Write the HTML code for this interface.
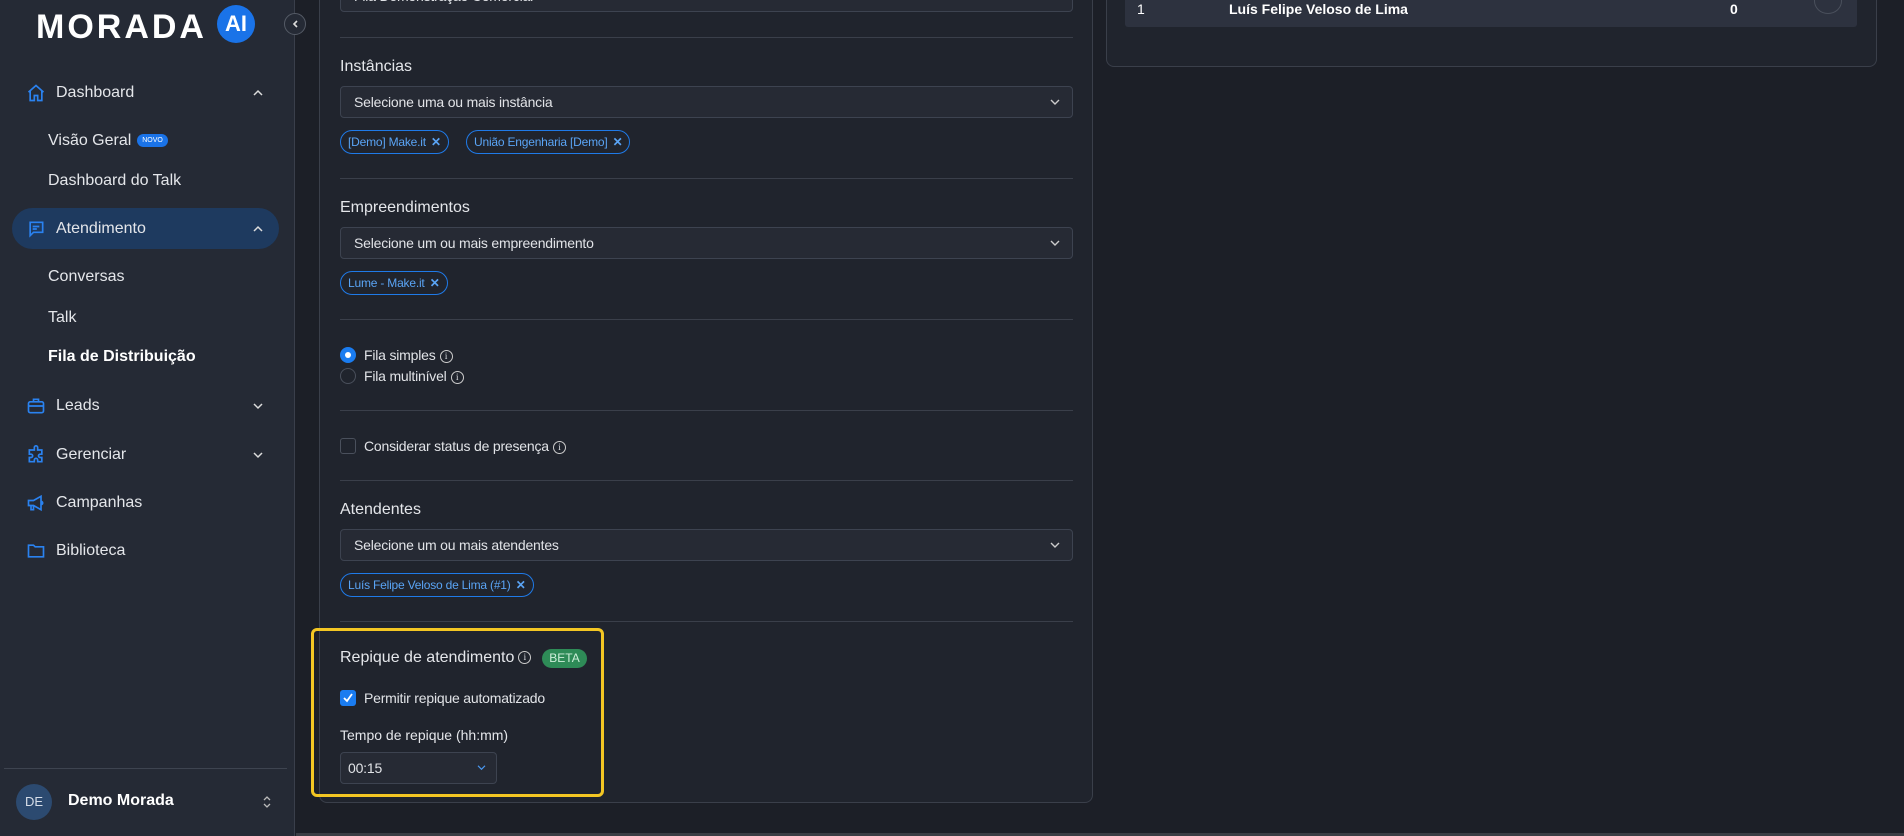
<!DOCTYPE html>
<html><head><meta charset="utf-8"><style>
*{box-sizing:border-box;margin:0;padding:0}
body{width:1904px;height:836px;overflow:hidden;background:#1c1f27;font-family:"Liberation Sans",sans-serif;color:#e6e8ec;position:relative}
.abs{position:absolute}
#side{left:0;top:0;width:295px;height:836px;background:#252a35;border-right:1px solid #3a3f4b}
.nav{position:absolute;left:0;width:295px;font-size:16px;color:#e4e6ea;display:flex;align-items:center;height:30px;transform:translateY(-15px)}
.nav .t{position:absolute;left:56px}
.sub{position:absolute;left:48px;font-size:16px;color:#e4e6ea;transform:translateY(-50%)}
.chev{position:absolute;left:252px;width:12px;height:12px}
.ic{position:absolute;left:26px;width:20px;height:20px}
#card{left:319px;top:-10px;width:774px;height:813px;background:#20242d;border:1px solid #3a3f4a;border-radius:8px}
.lab{position:absolute;left:340px;font-size:16px;color:#e4e6ea;transform:translateY(-50%)}
.div{position:absolute;left:340px;width:733px;height:1px;background:#3a3f4a}
.sel{position:absolute;left:340px;width:733px;height:32px;background:#262a34;border:1px solid #3d4350;border-radius:4px;font-size:14px;color:#e1e3e7;padding-left:13px;line-height:30px;letter-spacing:-0.2px}
.sel svg{position:absolute;right:12px;top:11px}
.chip{position:absolute;height:24px;border:1px solid #1f7ae8;border-radius:12px;font-size:12px;color:#5aa4f5;line-height:22px;padding:0 22px 0 7px;letter-spacing:-0.2px}
.chip:after{content:"✕";position:absolute;right:7px;top:0;font-size:12px;font-weight:bold;color:#5aa4f5}
.info{display:inline-block;width:13px;height:13px;border:1px solid #ccc;border-radius:50%;font-size:9px;line-height:11px;text-align:center;vertical-align:middle;margin-left:4px;font-family:"Liberation Serif",serif}
.opt{position:absolute;left:364px;font-size:14px;color:#e1e3e7;transform:translateY(-50%);letter-spacing:-0.2px}
</style></head><body>
<div id="side" class="abs">
  <div class="abs" style="left:36px;top:9px;font-size:34px;font-weight:bold;color:#fff;line-height:36px;letter-spacing:3px">MORADA</div>
  <div class="abs" style="left:217px;top:5px;width:38px;height:38px;border-radius:50%;background:#1a73e8;color:#fff;font-weight:bold;font-size:22px;text-align:center;line-height:38px">AI</div>
  <div class="nav" style="top:93px"><svg class="ic" style="top:5px" viewBox="0 0 24 24" fill="none" stroke="#2a82f0" stroke-width="2"><path d="M3 11l9-8 9 8M5 9v12h5v-6h4v6h5V9"/></svg><span class="t">Dashboard</span><svg class="chev" style="top:9px" viewBox="0 0 12 12" fill="none" stroke="#ddd" stroke-width="1.5"><path d="M2 8l4-4 4 4"/></svg></div>
  <div class="sub" style="top:141px">Visão Geral</div>
  <div class="abs" style="left:137px;top:134px;width:31px;height:13px;border-radius:7px;background:#1a73e8;color:#fff;font-size:7px;text-align:center;line-height:13px">NOVO</div>
  <div class="sub" style="top:181px">Dashboard do Talk</div>
  <div class="abs" style="left:12px;top:208px;width:267px;height:41px;border-radius:21px;background:#1e3a5f"></div>
  <div class="nav" style="top:229px"><svg class="ic" style="top:5px" viewBox="0 0 24 24" fill="none" stroke="#2a82f0" stroke-width="2"><path d="M4 4h16v12H9l-4 4V4zM8 9h8M8 12h5"/></svg><span class="t">Atendimento</span><svg class="chev" style="top:9px" viewBox="0 0 12 12" fill="none" stroke="#ddd" stroke-width="1.5"><path d="M2 8l4-4 4 4"/></svg></div>
  <div class="sub" style="top:277px">Conversas</div>
  <div class="sub" style="top:318px">Talk</div>
  <div class="sub" style="top:357px;font-weight:bold;color:#fff">Fila de Distribuição</div>
  <div class="nav" style="top:406px"><svg class="ic" style="top:5px" viewBox="0 0 24 24" fill="none" stroke="#2a82f0" stroke-width="2"><rect x="3" y="7" width="18" height="13" rx="2"/><path d="M9 7V4h6v3M3 12h18"/></svg><span class="t">Leads</span><svg class="chev" style="top:9px" viewBox="0 0 12 12" fill="none" stroke="#ddd" stroke-width="1.5"><path d="M2 4l4 4 4-4"/></svg></div>
  <div class="nav" style="top:455px"><svg class="ic" style="top:5px" viewBox="0 0 24 24" fill="none" stroke="#2a82f0" stroke-width="2"><path d="M10 3a2 2 0 014 0v3h5v5h-2a2 2 0 000 4h2v5h-5v-2a2 2 0 00-4 0v2H4v-5h2a2 2 0 000-4H4V6h6z"/></svg><span class="t">Gerenciar</span><svg class="chev" style="top:9px" viewBox="0 0 12 12" fill="none" stroke="#ddd" stroke-width="1.5"><path d="M2 4l4 4 4-4"/></svg></div>
  <div class="nav" style="top:503px"><svg class="ic" style="top:5px" viewBox="0 0 24 24" fill="none" stroke="#2a82f0" stroke-width="2"><path d="M3 9h6l9-5v16l-9-5H3zM6 15v5h3v-5M18 10a2 2 0 010 4"/></svg><span class="t">Campanhas</span></div>
  <div class="nav" style="top:551px"><svg class="ic" style="top:5px" viewBox="0 0 24 24" fill="none" stroke="#2a82f0" stroke-width="2"><path d="M3 5h6l2 2h10v12H3z"/></svg><span class="t">Biblioteca</span></div>
  <div class="abs" style="left:4px;top:768px;width:283px;height:1px;background:#3e4450"></div>
  <div class="abs" style="left:16px;top:784px;width:36px;height:36px;border-radius:50%;background:#2c4a70;color:#d6dde8;font-size:13px;text-align:center;line-height:36px">DE</div>
  <div class="abs" style="left:68px;top:792px;font-size:16px;font-weight:bold;color:#fff">Demo Morada</div>
  <svg class="abs" style="left:261px;top:795px" width="12" height="14" viewBox="0 0 12 14" fill="none" stroke="#bbb" stroke-width="1.3"><path d="M3 5l3-3 3 3M3 9l3 3 3-3"/></svg>
</div>
<div class="abs" style="left:284px;top:13px;width:22px;height:22px;border-radius:50%;border:1px solid #555b66;background:#252a35"><svg style="position:absolute;left:6px;top:5px" width="10" height="10" viewBox="0 0 10 10" fill="none" stroke="#ddd" stroke-width="1.6"><path d="M6 2L3 5l3 3"/></svg></div>

<div id="card" class="abs"></div>
<div class="sel" style="top:-20px">Fila Demonstração Comercial</div>
<div class="div" style="top:37px"></div>
<div class="lab" style="top:67px">Instâncias</div>
<div class="sel" style="top:86px">Selecione uma ou mais instância<svg width="10" height="8" viewBox="0 0 10 8" fill="none" stroke="#ccc" stroke-width="1.4"><path d="M1 2l4 4 4-4"/></svg></div>
<div class="chip" style="left:340px;top:130px">[Demo] Make.it</div>
<div class="chip" style="left:466px;top:130px">União Engenharia [Demo]</div>
<div class="div" style="top:178px"></div>
<div class="lab" style="top:208px">Empreendimentos</div>
<div class="sel" style="top:227px">Selecione um ou mais empreendimento<svg width="10" height="8" viewBox="0 0 10 8" fill="none" stroke="#ccc" stroke-width="1.4"><path d="M1 2l4 4 4-4"/></svg></div>
<div class="chip" style="left:340px;top:271px">Lume - Make.it</div>
<div class="div" style="top:319px"></div>
<div class="abs" style="left:340px;top:347px;width:16px;height:16px;border-radius:50%;background:#1a7cf0"><div class="abs" style="left:5px;top:5px;width:6px;height:6px;border-radius:50%;background:#fff"></div></div>
<div class="opt" style="top:355px">Fila simples<span class="info">i</span></div>
<div class="abs" style="left:340px;top:368px;width:16px;height:16px;border-radius:50%;border:1px solid #4a505c"></div>
<div class="opt" style="top:376px">Fila multinível<span class="info">i</span></div>
<div class="div" style="top:410px"></div>
<div class="abs" style="left:340px;top:438px;width:16px;height:16px;border-radius:3px;border:1px solid #4a505c"></div>
<div class="opt" style="top:446px">Considerar status de presença<span class="info">i</span></div>
<div class="div" style="top:480px"></div>
<div class="lab" style="top:510px">Atendentes</div>
<div class="sel" style="top:529px">Selecione um ou mais atendentes<svg width="10" height="8" viewBox="0 0 10 8" fill="none" stroke="#ccc" stroke-width="1.4"><path d="M1 2l4 4 4-4"/></svg></div>
<div class="chip" style="left:340px;top:573px">Luís Felipe Veloso de Lima (#1)</div>
<div class="div" style="top:621px"></div>
<div class="abs" style="left:311px;top:628px;width:293px;height:169px;border:3px solid #f3c623;border-radius:6px"></div>
<div class="lab" style="top:658px">Repique de atendimento<span class="info">i</span></div>
<div class="abs" style="left:542px;top:649px;width:45px;height:19px;border-radius:10px;background:#2e8b57;color:#cdeed9;font-size:12px;text-align:center;line-height:19px">BETA</div>
<div class="abs" style="left:340px;top:690px;width:16px;height:16px;border-radius:3px;background:#1a7cf0"><svg style="position:absolute;left:3px;top:3px" width="10" height="10" viewBox="0 0 10 10" fill="none" stroke="#fff" stroke-width="1.8"><path d="M1 5l3 3 5-7"/></svg></div>
<div class="opt" style="top:698px">Permitir repique automatizado</div>
<div class="lab" style="top:735px;font-size:14px">Tempo de repique (hh:mm)</div>
<div class="sel" style="top:752px;width:157px;padding-left:7px">00:15<svg style="right:10px" width="9" height="7" viewBox="0 0 10 8" fill="none" stroke="#4a9af5" stroke-width="1.4"><path d="M1 2l4 4 4-4"/></svg></div>

<div class="abs" style="left:1106px;top:-20px;width:771px;height:87px;background:#20242d;border:1px solid #3a3f4a;border-radius:8px"></div>
<div class="abs" style="left:1125px;top:-10px;width:732px;height:37px;background:#2d323f;border-radius:3px"></div>
<div class="abs" style="left:1137px;top:1px;font-size:14px;color:#fff">1</div>
<div class="abs" style="left:1229px;top:1px;font-size:14px;font-weight:bold;color:#fff">Luís Felipe Veloso de Lima</div>
<div class="abs" style="left:1730px;top:1px;font-size:14px;font-weight:bold;color:#fff">0</div>
<div class="abs" style="left:1814px;top:-12px;width:28px;height:26px;border-radius:50%;border:1px solid #4a505c"></div>
<div class="abs" style="left:296px;top:833px;width:1608px;height:3px;background:#3a3d44"></div>
</body></html>
